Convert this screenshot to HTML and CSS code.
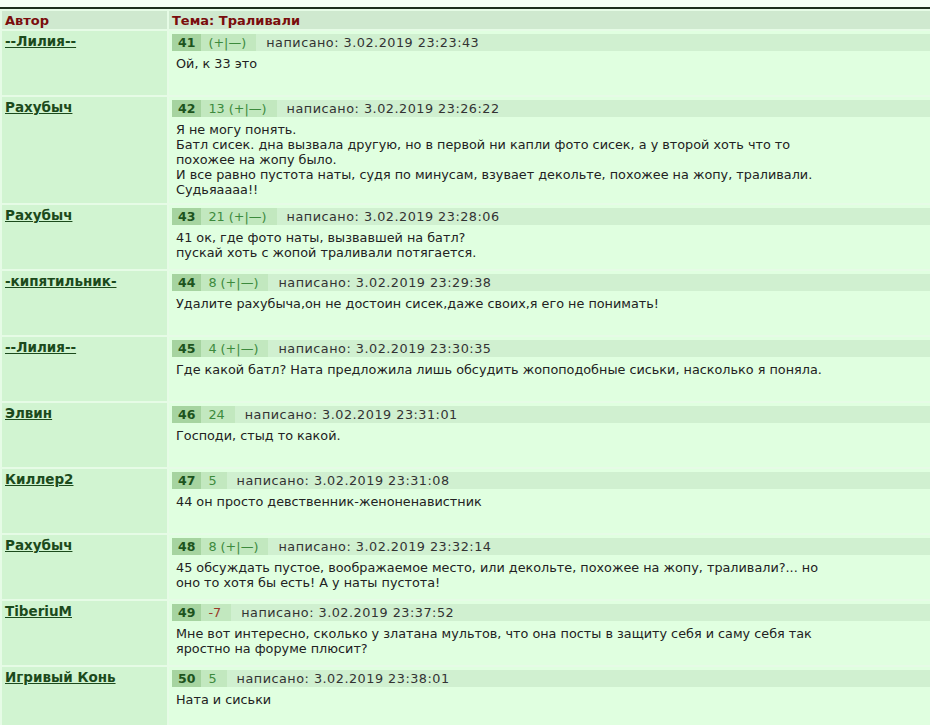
FILE: index.html
```html
<!DOCTYPE html>
<html lang="ru">
<head>
    <meta charset="UTF-8">
    <title>Тема: Траливали</title>
    <link rel="stylesheet" href="styles.css">
</head>
<body>

    <div class="topline"></div>

    <table class="forum">
        <thead>
            <tr>
                <th class="author-col">Автор</th>
                <th>Тема: Траливали</th>
            </tr>
        </thead>
        <tbody>
            <tr>
                <td class="author"><a href="#">--Лилия--</a></td>
                <td class="post">
                    <div class="bar"><span class="num">41</span><span class="votes">(+|—)</span><span class="date">написано: 3.02.2019 23:23:43</span></div>
                    <div class="msg">Ой, к 33 это</div>
                </td>
            </tr>
            <tr>
                <td class="author"><a href="#">Рахубыч</a></td>
                <td class="post">
                    <div class="bar"><span class="num">42</span><span class="votes">13 (+|—)</span><span class="date">написано: 3.02.2019 23:26:22</span></div>
                    <div class="msg">Я не могу понять.<br>Батл сисек. дна вызвала другую, но в первой ни капли фото сисек, а у второй хоть что то<br>похожее на жопу было.<br>И все равно пустота наты, судя по минусам, взувает декольте, похожее на жопу, траливали.<br>Судьяаааа!!</div>
                </td>
            </tr>
            <tr>
                <td class="author"><a href="#">Рахубыч</a></td>
                <td class="post">
                    <div class="bar"><span class="num">43</span><span class="votes">21 (+|—)</span><span class="date">написано: 3.02.2019 23:28:06</span></div>
                    <div class="msg">41 ок, где фото наты, вызвавшей на батл?<br>пускай хоть с жопой траливали потягается.</div>
                </td>
            </tr>
            <tr>
                <td class="author"><a href="#">-кипятильник-</a></td>
                <td class="post">
                    <div class="bar"><span class="num">44</span><span class="votes">8 (+|—)</span><span class="date">написано: 3.02.2019 23:29:38</span></div>
                    <div class="msg">Удалите рахубыча,он не достоин сисек,даже своих,я его не понимать!</div>
                </td>
            </tr>
            <tr>
                <td class="author"><a href="#">--Лилия--</a></td>
                <td class="post">
                    <div class="bar"><span class="num">45</span><span class="votes">4 (+|—)</span><span class="date">написано: 3.02.2019 23:30:35</span></div>
                    <div class="msg">Где какой батл? Ната предложила лишь обсудить жопоподобные сиськи, насколько я поняла.</div>
                </td>
            </tr>
            <tr>
                <td class="author"><a href="#">Элвин</a></td>
                <td class="post">
                    <div class="bar"><span class="num">46</span><span class="votes">24</span><span class="date">написано: 3.02.2019 23:31:01</span></div>
                    <div class="msg">Господи, стыд то какой.</div>
                </td>
            </tr>
            <tr>
                <td class="author"><a href="#">Киллер2</a></td>
                <td class="post">
                    <div class="bar"><span class="num">47</span><span class="votes">5</span><span class="date">написано: 3.02.2019 23:31:08</span></div>
                    <div class="msg">44 он просто девственник-женоненавистник</div>
                </td>
            </tr>
            <tr>
                <td class="author"><a href="#">Рахубыч</a></td>
                <td class="post">
                    <div class="bar"><span class="num">48</span><span class="votes">8 (+|—)</span><span class="date">написано: 3.02.2019 23:32:14</span></div>
                    <div class="msg">45 обсуждать пустое, воображаемое место, или декольте, похожее на жопу, траливали?... но<br>оно то хотя бы есть! А у наты пустота!</div>
                </td>
            </tr>
            <tr>
                <td class="author"><a href="#">TiberiuM</a></td>
                <td class="post">
                    <div class="bar"><span class="num">49</span><span class="votes minus">-7</span><span class="date">написано: 3.02.2019 23:37:52</span></div>
                    <div class="msg">Мне вот интересно, сколько у златана мультов, что она посты в защиту себя и саму себя так<br>яростно на форуме плюсит?</div>
                </td>
            </tr>
            <tr>
                <td class="author"><a href="#">Игривый Конь</a></td>
                <td class="post">
                    <div class="bar"><span class="num">50</span><span class="votes">5</span><span class="date">написано: 3.02.2019 23:38:01</span></div>
                    <div class="msg">Ната и сиськи</div>
                </td>
            </tr>
        </tbody>
    </table>

</body>
</html>
```

FILE: styles.css
```css
body {
    margin: 0;
    overflow: hidden;
    background-color: #f4fff4;
    font-family: "DejaVu Sans", Verdana, sans-serif;
    font-size: 12.8px;
    color: #222;
}
.topline {
    height: 7px;
    border-bottom: 2px solid #1c2e1c;
}
.forum {
    width: calc(100% + 6px);
    border-collapse: separate;
    border-spacing: 2px;
    background-color: #e6fbe6;
}
.forum th {
    background-color: #cfe9cf;
    color: #7a0d0d;
    font-size: 13px;
    text-align: left;
    height: 18px;
    padding: 0 3px;
}
.author-col {
    width: 159px;
}
.forum td {
    vertical-align: top;
    height: 55px;
}
.author {
    background-color: #d1f4d1;
    padding: 2px 3px;
}
.author a {
    color: #1c4a1c;
    font-weight: bold;
    font-size: 13.5px;
    line-height: 17px;
}
.post {
    background-color: #e0ffe0;
    padding: 3px 0 6px 3px;
}
.bar {
    display: flex;
    background-color: #d0f0d0;
    line-height: 17px;
    height: 17px;
    letter-spacing: 0.5px;
}
.num {
    background-color: #a6d4a0;
    color: #1d531d;
    font-weight: bold;
    font-size: 12.5px;
    letter-spacing: 0;
    padding: 0 6px;
}
.votes {
    background-color: #c2e8bf;
    color: #3d8a3d;
    letter-spacing: 0;
    padding: 0 10px 0 7px;
}
.votes.minus {
    color: #9a3a2a;
}
.date {
    color: #333;
    padding-left: 10px;
}
.msg {
    margin-top: 5px;
    padding-left: 4px;
    line-height: 15px;
}
```
